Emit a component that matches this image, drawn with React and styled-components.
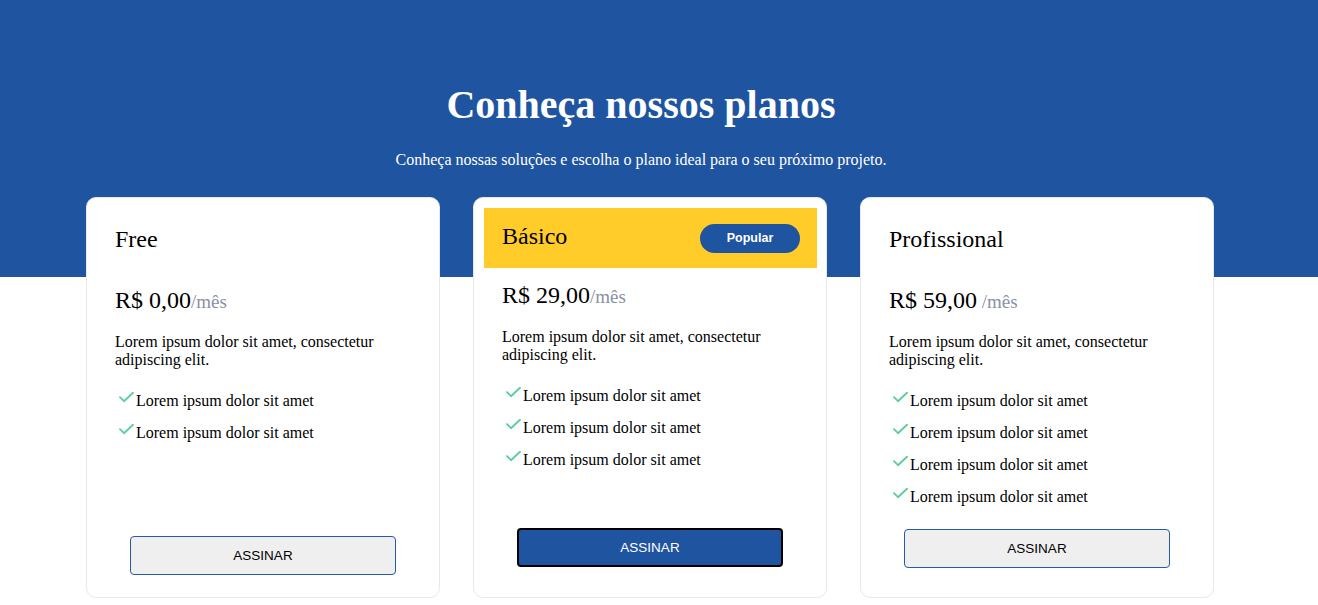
import React from "react";
import styled, { createGlobalStyle } from "styled-components";

const plans = [
  {
    name: "Free",
    price: "R$ 0,00",
    period: "/mês",
    features: ["Lorem ipsum dolor sit amet", "Lorem ipsum dolor sit amet"],
    bottom: 22,
  },
  {
    name: "Básico",
    price: "R$ 29,00",
    period: "/mês",
    popular: true,
    features: [
      "Lorem ipsum dolor sit amet",
      "Lorem ipsum dolor sit amet",
      "Lorem ipsum dolor sit amet",
    ],
    bottom: 30,
  },
  {
    name: "Profissional",
    price: "R$ 59,00",
    period: " /mês",
    features: [
      "Lorem ipsum dolor sit amet",
      "Lorem ipsum dolor sit amet",
      "Lorem ipsum dolor sit amet",
      "Lorem ipsum dolor sit amet",
    ],
    bottom: 30,
  },
];

const CheckIcon = () => (
  <svg width="15" height="11" viewBox="0 0 15 11" fill="none">
    <path
      d="M1 5.2 L5 9.2 L14 0.8"
      stroke="#5ccf9f"
      strokeWidth="1.9"
      strokeLinecap="round"
      strokeLinejoin="round"
    />
  </svg>
);

export default () => {
  return (
    <>
      <GlobalStyle />
      <Page>
        <Hero>
          <Title>Conheça nossos planos</Title>
          <Subtitle>
            Conheça nossas soluções e escolha o plano ideal para o seu próximo
            projeto.
          </Subtitle>
        </Hero>

        <Plans>
          {plans.map((plan) => (
            <PlanCard key={plan.name}>
              <PlanHeader $popular={plan.popular}>
                <PlanName>{plan.name}</PlanName>
                {plan.popular && <Badge>Popular</Badge>}
              </PlanHeader>

              <PlanBody $popular={plan.popular}>
                <Price>
                  {plan.price}
                  <Period>{plan.period}</Period>
                </Price>
                <Description>
                  Lorem ipsum dolor sit amet, consectetur adipiscing elit.
                </Description>
                <Features>
                  {plan.features.map((feature, i) => (
                    <Feature key={i}>
                      <CheckIcon />
                      <span>{feature}</span>
                    </Feature>
                  ))}
                </Features>
              </PlanBody>

              <PlanFooter $bottom={plan.bottom}>
                <SubscribeButton type="button" $primary={plan.popular}>
                  ASSINAR
                </SubscribeButton>
              </PlanFooter>
            </PlanCard>
          ))}
        </Plans>
      </Page>
    </>
  );
};

const GlobalStyle = createGlobalStyle`
  html, body {
    margin: 0;
    padding: 0;
    overflow: hidden;
  }
  body {
    font-family: "Liberation Serif", "Times New Roman", serif;
    color: #000;
    background: #fff;
  }
  * {
    box-sizing: border-box;
  }
`;

const Page = styled.div`
  width: 100%;
  height: 605px;
  background: linear-gradient(#1f54a0 0, #1f54a0 277px, #fff 277px);
`;

const Hero = styled.header`
  display: flex;
  flex-direction: column;
  align-items: center;
  padding: 82px 36px 0 0;
  color: #fff;
`;

const Title = styled.h1`
  margin: 0;
  font-size: 40px;
  line-height: 46px;
  font-weight: bold;
`;

const Subtitle = styled.p`
  margin: 23px 0 0;
  font-size: 16px;
  line-height: 18px;
`;

const Plans = styled.section`
  display: grid;
  grid-template-columns: repeat(3, 354px);
  gap: 33px;
  justify-content: center;
  padding-right: 18px;
  margin-top: 28px;
`;

const PlanCard = styled.article`
  display: flex;
  flex-direction: column;
  height: 401px;
  background-color: #fff;
  border: 1px solid #e8e8e8;
  border-radius: 10px;
`;

const PlanHeader = styled.div`
  display: flex;
  align-items: center;
  justify-content: space-between;
  ${({ $popular }) =>
    $popular
      ? `
    height: 60px;
    margin: 10px 9px 0 10px;
    padding: 0 17px 3px 18px;
    background-color: #ffcc29;
  `
      : `
    padding: 28px 28px 0;
  `}
`;

const PlanName = styled.h2`
  margin: 0;
  font-size: 24px;
  line-height: 27px;
  font-weight: normal;
`;

const Badge = styled.span`
  display: flex;
  align-items: center;
  justify-content: center;
  width: 100px;
  height: 29px;
  margin-top: 3px;
  border-radius: 15px;
  background-color: #1f54a0;
  color: #fff;
  font-family: "Liberation Sans", Arial, sans-serif;
  font-size: 12.5px;
  font-weight: bold;
`;

const PlanBody = styled.div`
  padding: ${({ $popular }) => ($popular ? "14px 28px 0" : "34px 28px 0")};
`;

const Price = styled.div`
  font-size: 24px;
  line-height: 27px;
`;

const Period = styled.span`
  font-size: 19px;
  color: #8a90a6;
`;

const Description = styled.p`
  margin: 18px 0 0;
  font-size: 16px;
  line-height: 18px;
`;

const Features = styled.ul`
  list-style: none;
  margin: 23px 0 0;
  padding: 0 0 0 4px;
  display: flex;
  flex-direction: column;
  gap: 14px;
`;

const Feature = styled.li`
  display: flex;
  align-items: flex-start;
  gap: 2px;
  font-size: 16px;
  line-height: 18px;

  svg {
    flex-shrink: 0;
  }
`;

const PlanFooter = styled.div`
  display: flex;
  justify-content: center;
  margin-top: auto;
  padding: 23px 0 ${({ $bottom }) => $bottom}px;
`;

const SubscribeButton = styled.button`
  width: 266px;
  height: 39px;
  border-radius: 4px;
  font-family: "Liberation Sans", Arial, sans-serif;
  font-size: 13.5px;
  cursor: pointer;
  color: ${({ $primary }) => ($primary ? "#fff" : "#000")};
  background-color: ${({ $primary }) => ($primary ? "#1f54a0" : "#efefef")};
  border: ${({ $primary }) =>
    $primary ? "2px solid #000" : "1px solid #2a5aa5"};
`;
